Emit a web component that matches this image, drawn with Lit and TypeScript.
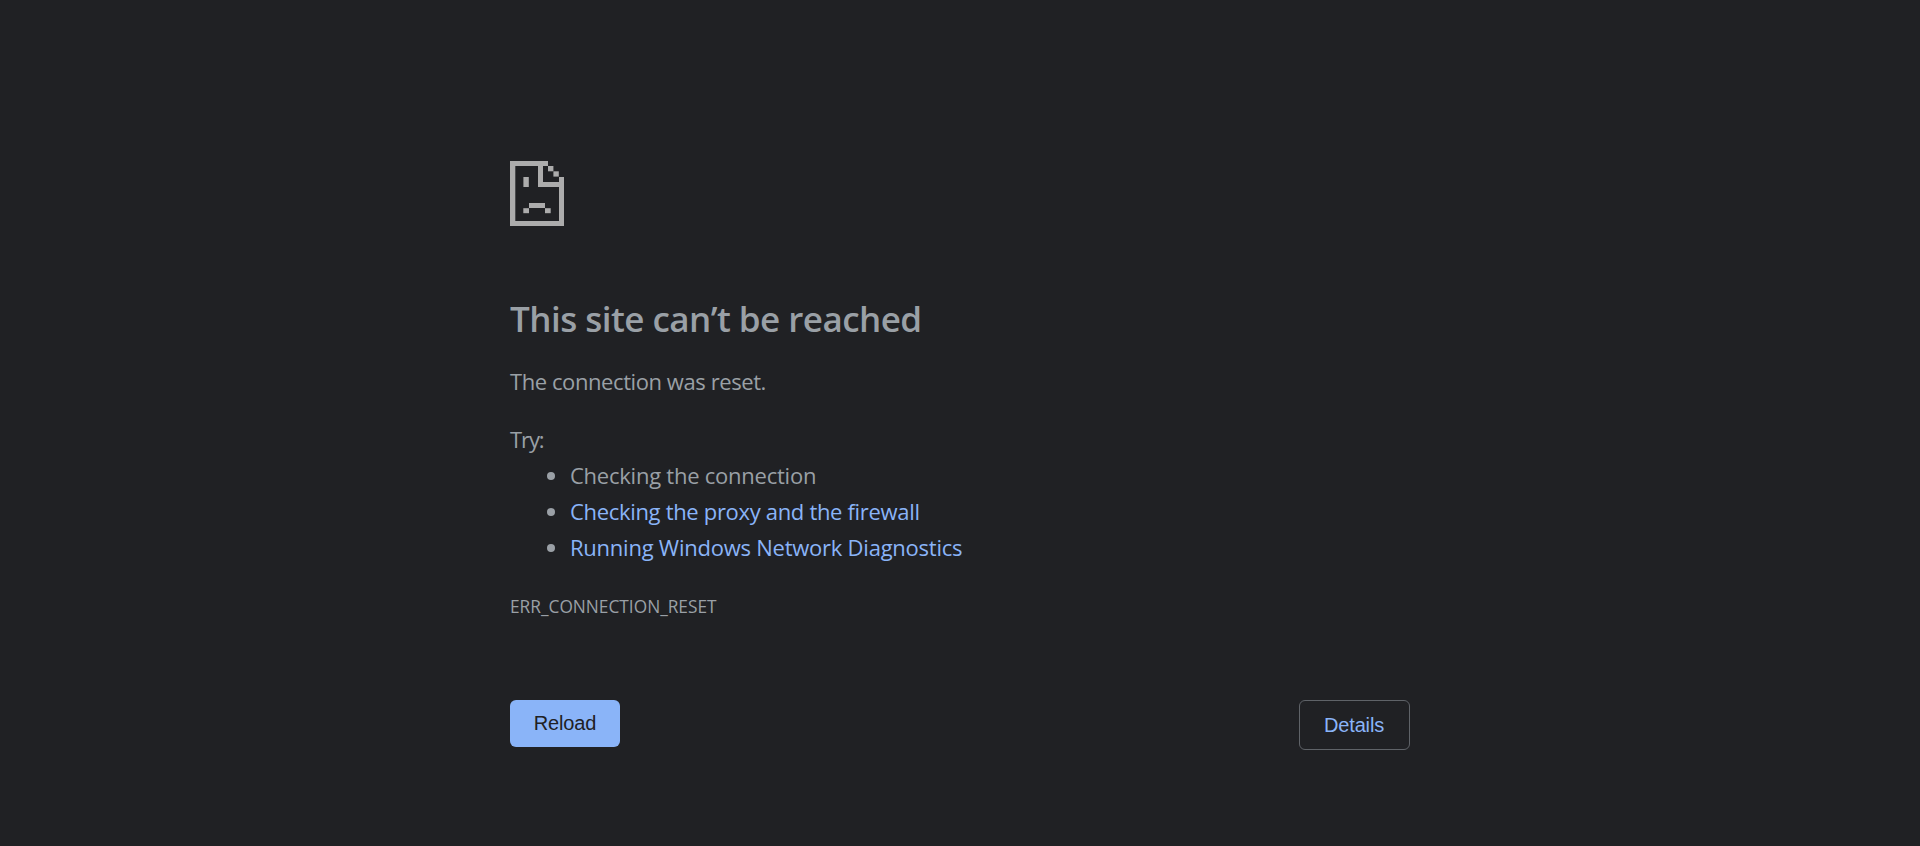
import { LitElement, html, css, svg } from "lit";
import { customElement } from "lit/decorators.js";

const SUGGESTIONS = [
  { text: "Checking the connection", link: false, cls: "s1" },
  { text: "Checking the proxy and the firewall", link: true, cls: "s2" },
  { text: "Running Windows Network Diagnostics", link: true, cls: "s3" },
];

// Blocks of the sad page glyph: [x, y, width, height]
const BLOCKS = [
  [0, 0, 38, 5],
  [0, 5, 5.3, 55],
  [0, 60, 54, 5],
  [49, 16, 5, 44],
  [28, 5, 5, 21],
  [33, 21, 16, 5],
  [38, 5, 5.4, 5.3],
  [43.4, 10.3, 5.4, 5.3],
  [13.4, 16, 5.4, 10],
  [19, 42, 16, 5],
  [13.3, 47.2, 5.7, 5],
  [35, 47.2, 5.7, 5],
];

@customElement("app-root")
export class AppRoot extends LitElement {
  static styles = css`
    :host {
      display: block;
      box-sizing: border-box;
      height: 846px;
      overflow: hidden;
      padding-top: 161px;
      background: #202124;
      color: #9aa0a6;
      font-family: "Open Sans", "Noto Sans", sans-serif;
      font-size: 22px;
      line-height: 36px;
    }
    .page { width: 900px; margin: 0 auto; }
    .icon { display: block; width: 54px; height: 65px; fill: #acacac; }
    h1 {
      margin: 70px 0 0;
      font-size: 35px;
      font-weight: 600;
      line-height: 45px;
      letter-spacing: -0.54px;
      white-space: nowrap;
    }
    p { margin: 0; white-space: nowrap; }
    .summary { margin-top: 22px; letter-spacing: -0.42px; }
    .try { margin-top: 22px; letter-spacing: -1.1px; }
    ul { margin: 0; padding: 0 0 0 60px; white-space: nowrap; }
    .s1 { letter-spacing: -0.24px; }
    .s2 { letter-spacing: -0.32px; }
    .s3 { letter-spacing: -0.24px; }
    a { color: #8ab4f8; text-decoration: none; }
    .code { margin-top: 24px; font-size: 17.3px; }
    .actions {
      display: flex;
      justify-content: space-between;
      align-items: flex-start;
      margin-top: 75px;
    }
    button {
      box-sizing: border-box;
      margin: 0;
      padding: 0;
      border-radius: 6px;
      font: 20px/24px "Liberation Sans", Arial, sans-serif;
      letter-spacing: -0.15px;
    }
    .reload { width: 110px; height: 47px; padding-bottom: 2px; border: 0; background: #8ab4f8; color: #202124; }
    .details { width: 111px; height: 50px; padding-right: 1px; border: 1px solid #5f6368; background: #202124; color: #8ab4f8; }
  `;

  render() {
    return html`
      <main class="page">
        <svg class="icon" viewBox="0 0 54 65">
          ${BLOCKS.map(([x, y, w, h]) => svg`<rect x=${x} y=${y} width=${w} height=${h}></rect>`)}
        </svg>
        <h1>This site can’t be reached</h1>
        <p class="summary">The connection was reset.</p>
        <p class="try">Try:</p>
        <ul>
          ${SUGGESTIONS.map((s) => html`<li class=${s.cls}>${s.link ? html`<a>${s.text}</a>` : s.text}</li>`)}
        </ul>
        <p class="code">ERR_CONNECTION_RESET</p>
        <div class="actions">
          <button class="reload">Reload</button>
          <button class="details">Details</button>
        </div>
      </main>
    `;
  }
}
